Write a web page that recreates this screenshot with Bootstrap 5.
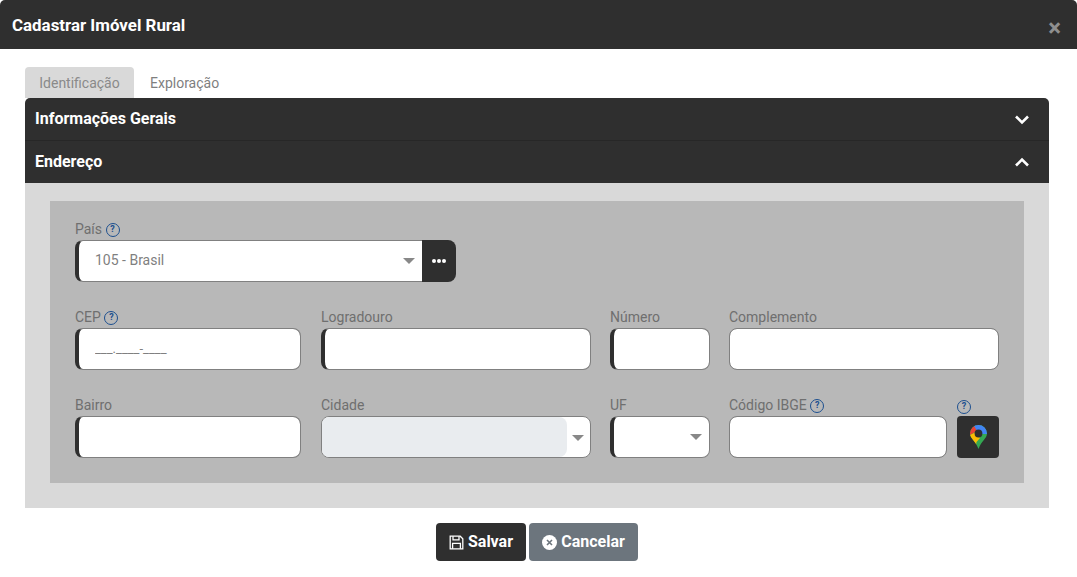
<!DOCTYPE html>
<html lang="pt-BR">
<head>
  <meta charset="UTF-8">
  <title>Cadastrar Imóvel Rural</title>
  <link href="https://cdn.jsdelivr.net/npm/bootstrap@5.3.2/dist/css/bootstrap.min.css" rel="stylesheet">
  <style>
    html, body { height: 100%; }
    body { background: #fff; font-family: Roboto, "Liberation Sans", sans-serif; font-size: 14px; overflow: hidden; }
    .sheet { height: 577px; background: #fff; }
    .sheet-head { height: 49px; background: #2f2f2f; color: #fff; padding: 1px 12px 0; border-radius: 5px 5px 0 0; }
    .sheet-title { font-size: 16.9px; font-weight: 700; margin: 0; }
    .sheet-close { color: #8f8f8f; font-size: 24px; font-weight: 700; line-height: 1; background: none; border: 0; padding: 0; margin: 5px 4px 0 0; }
    .sheet-body { padding: 18px 28px 0 25px; }
    .tabs-row { height: 31px; gap: 3px; }
    .tab-item { font-size: 14px; color: #7f7f7f; padding: 6px 13px 0; width: 109px; height: 31px; text-align: center; border-radius: 4px 4px 0 0; text-decoration: none; }
    .tab-item.on { background: #d9d9d9; color: #8a8a8a; }
    .tab-item.off { width: 98px; padding-left: 13px; padding-right: 0; text-align: left; }
    .acc-head { height: 42px; background: #2f2f2f; color: #fff; font-size: 16px; font-weight: 700; padding: 0 19px 0 10px; }
    .acc-head.first { border-radius: 5px 5px 0 0; border-bottom: 1px solid #272727; height: 43px; }
    .acc-body { background: #d9d9d9; padding: 18px 25px 24px; height: 325px; }
    .inner-panel { background: #b8b8b8; height: 282px; padding: 20px 25px 0; }
    .form-line { display: flex; height: 88px; }
    .fld { flex: none; margin-right: 20px; }
    .fld:last-child { margin-right: 0; }
    .w-226 { width: 226px; }
    .w-270 { width: 270px; }
    .w-270.mid { margin-right: 19px; }
    .w-100px { width: 100px; margin-right: 19px; }
    .w-218 { width: 218px; margin-right: 10px; }
    .w-42 { width: 42px; }
    .w-348 { width: 348px; }
    .fld-label { display: block; color: #6f6f6f; font-size: 14px; line-height: 16px; height: 19px; margin: 0; white-space: nowrap; }
    .help-dot { display: inline-block; width: 14px; height: 14px; border: 1.5px solid #1c4f8f; border-radius: 50%; color: #1c4f8f; font-size: 9px; font-weight: 700; line-height: 11px; text-align: center; vertical-align: 2px; margin-left: 0; }
    .form-control.box, .form-select.box { height: 42px; border: 1px solid #808080; border-radius: 8px; font-size: 14px; color: #7f7f7f; padding: 0 16px 2px; box-shadow: none; }
    .form-select.box { background-image: url("data:image/svg+xml,%3csvg xmlns='http://www.w3.org/2000/svg' viewBox='0 0 12 6'%3e%3cpath fill='%23888' d='M0 0h12L6 6z'/%3e%3c/svg%3e"); background-size: 12px 6px; background-position: right 7px center; }
    .box.need { border-left: 4px solid #2f2f2f; }
    .box::placeholder { color: #808080; font-size: 13px; }
    .pais-wrap { width: 381px; }
    .pais-wrap .form-select.box { flex: 1; border-radius: 8px 0 0 8px; border-right: 0; background-position: right 7px center; }
    .dots-btn { width: 34px; height: 42px; background: #2f2f2f; border: 0; border-radius: 0 8px 8px 0; padding: 0; flex: none; }
    .select-shell { height: 42px; background: #fff; border: 1px solid #808080; border-radius: 8px; overflow: hidden; }
    .select-fill { width: 245px; background: #e9ecef; border-radius: 0 8px 8px 0; }
    .caret-mark { width: 0; height: 0; border-style: solid; border-width: 6px 6px 0; border-color: #888 transparent transparent; margin: 1px 0 0 5px; }
    .help-only { height: 19px; margin-top: -1px; margin-bottom: 1px; text-align: left; }
    .map-btn { width: 42px; height: 42px; background: #2f2f2f; border: 0; border-radius: 4px; padding: 0; }
    .foot-row { gap: 3px; padding-top: 15px; }
    .act-btn { height: 38px; font-size: 16px; font-weight: 700; color: #fff; border: 0; border-radius: 4px; padding: 0; gap: 4px; }
    .act-save { width: 90px; background: #2f2f2f; }
    .act-cancel { width: 109px; background: #6c757d; }
    .act-btn:hover { color: #fff; }
  </style>
</head>
<body>
<div class="sheet d-flex flex-column">
  <div class="sheet-head d-flex align-items-center justify-content-between">
    <h5 class="sheet-title">Cadastrar Imóvel Rural</h5>
    <button type="button" class="sheet-close">×</button>
  </div>

  <div class="sheet-body">
    <!-- Tabs -->
    <div class="tabs-row d-flex">
      <a class="tab-item on" href="#">Identificação</a>
      <a class="tab-item off" href="#">Exploração</a>
    </div>

    <div class="acc-head first d-flex align-items-center justify-content-between">
      <span>Informações Gerais</span>
      <svg width="16" height="11" viewBox="0 0 16 11"><path d="M2 2.5l6 6 6-6" fill="none" stroke="#fff" stroke-width="2.6"/></svg>
    </div>
    <div class="acc-head d-flex align-items-center justify-content-between">
      <span>Endereço</span>
      <svg width="16" height="11" viewBox="0 0 16 11"><path d="M2 8.5l6-6 6 6" fill="none" stroke="#fff" stroke-width="2.6"/></svg>
    </div>

    <div class="acc-body">
      <div class="inner-panel">
        <div class="form-line">
          <div class="fld w-348">
            <label class="fld-label">País <span class="help-dot">?</span></label>
            <div class="pais-wrap d-flex">
              <select class="form-select box need"><option>105 - Brasil</option></select>
              <button type="button" class="dots-btn d-flex align-items-center justify-content-center">
                <svg width="14" height="4" viewBox="0 0 14 4"><circle cx="2" cy="2" r="2" fill="#fff"/><circle cx="7" cy="2" r="2" fill="#fff"/><circle cx="12" cy="2" r="2" fill="#fff"/></svg>
              </button>
            </div>
          </div>
        </div>

        <div class="form-line">
          <div class="fld w-226">
            <label class="fld-label">CEP <span class="help-dot">?</span></label>
            <input type="text" class="form-control box need" placeholder="___.____-____">
          </div>
          <div class="fld w-270 mid">
            <label class="fld-label">Logradouro</label>
            <input type="text" class="form-control box need">
          </div>
          <div class="fld w-100px">
            <label class="fld-label">Número</label>
            <input type="text" class="form-control box need">
          </div>
          <div class="fld w-270">
            <label class="fld-label">Complemento</label>
            <input type="text" class="form-control box">
          </div>
        </div>

        <div class="form-line">
          <div class="fld w-226">
            <label class="fld-label">Bairro</label>
            <input type="text" class="form-control box need">
          </div>
          <div class="fld w-270 mid">
            <label class="fld-label">Cidade</label>
            <div class="select-shell d-flex align-items-center">
              <div class="select-fill h-100"></div>
              <span class="caret-mark"></span>
            </div>
          </div>
          <div class="fld w-100px">
            <label class="fld-label">UF</label>
            <select class="form-select box need"><option></option></select>
          </div>
          <div class="fld w-218">
            <label class="fld-label">Código IBGE <span class="help-dot">?</span></label>
            <input type="text" class="form-control box">
          </div>
          <div class="fld w-42">
            <div class="help-only"><span class="help-dot">?</span></div>
            <button type="button" class="map-btn d-flex align-items-center justify-content-center">
              <svg width="17" height="24" viewBox="0 0 17 24">
                <defs><clipPath id="pin"><path d="M8.5 0a8.5 8.5 0 0 1 8.5 8.5c0 5-6 8-8.5 15.5C6 16.500 0 13.500 0 8.500A8.500 8.500 0 0 1 8.500 0z"/></clipPath></defs>
                <g clip-path="url(#pin)">
                  <rect width="17" height="24" fill="#34a853"/>
                  <path d="M3 0h14v9h-5L5 4z" fill="#4285f4"/>
                  <path d="M0 10V0h3.500L7 6z" fill="#ea4335"/>
                  <path d="M0 10l6-3 4 6-3.500 4-1 7H0z" fill="#fbbc04"/>
                </g>
                <circle cx="8.500" cy="8.500" r="3.900" fill="#2f2f2f"/>
              </svg>
            </button>
          </div>
        </div>
      </div>
    </div>

    <div class="foot-row d-flex justify-content-center">
      <button type="button" class="btn act-btn act-save d-flex align-items-center justify-content-center">
        <svg width="15" height="15" viewBox="0 0 15 15" fill="none" stroke="#fff" stroke-width="1.3"><path d="M1.2 1.2h10l2.6 2.6v10H1.2z"/><path d="M4 1.2v3.6h6V1.2M3.600 13.800V8.400h7.800v5.400"/></svg>
        <span>Salvar</span>
      </button>
      <button type="button" class="btn act-btn act-cancel d-flex align-items-center justify-content-center">
        <svg width="15" height="15" viewBox="0 0 15 15"><circle cx="7.500" cy="7.500" r="7.500" fill="#fff"/><path d="M5 5l5 5M10 5l-5 5" stroke="#6c757d" stroke-width="1.6"/></svg>
        <span>Cancelar</span>
      </button>
    </div>
  </div>
</div>
<script src="https://cdn.jsdelivr.net/npm/bootstrap@5.3.2/dist/js/bootstrap.bundle.min.js"></script>
</body>
</html>
